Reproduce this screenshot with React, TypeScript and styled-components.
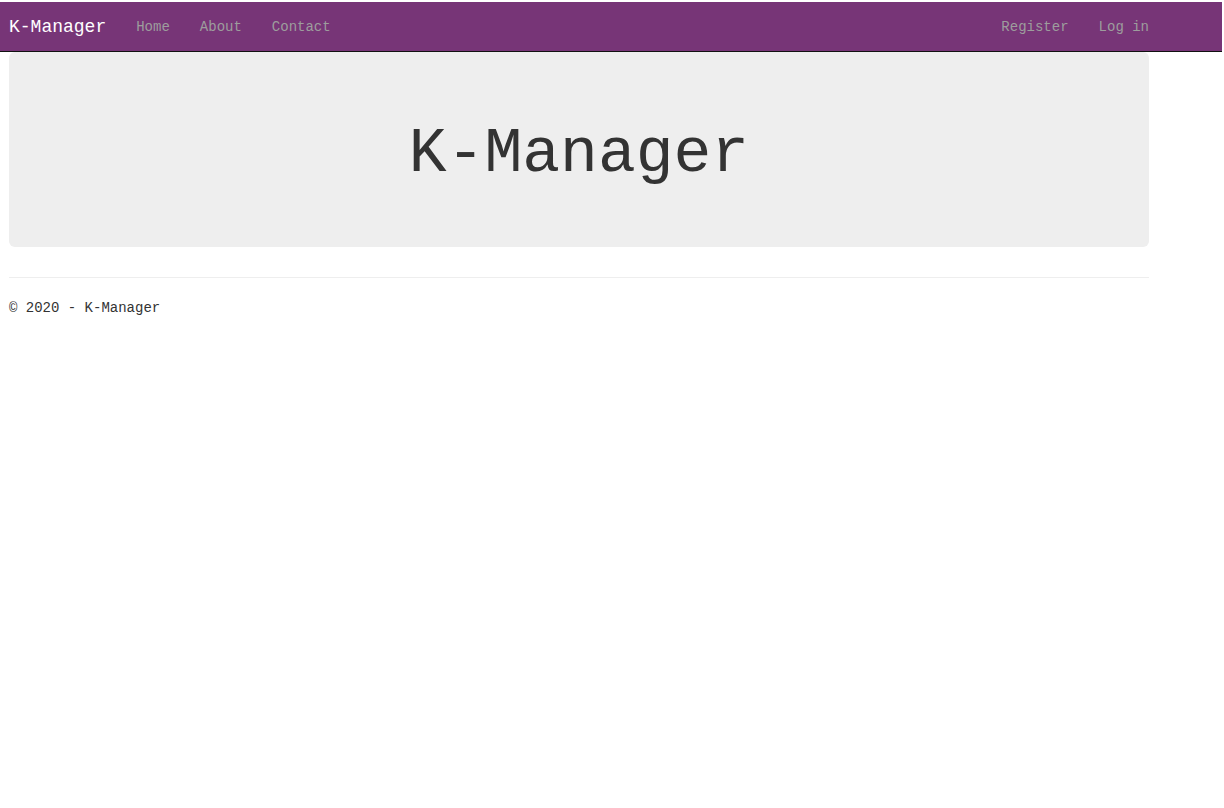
import React from "react";
import styled, { createGlobalStyle } from "styled-components";

const Global = createGlobalStyle`
  html, body { margin: 0; padding: 0; background: #fff; }
  body {
    font-family: "Liberation Mono", "DejaVu Sans Mono", monospace;
    font-size: 14px;
    line-height: 1.42857;
    color: #333;
    padding-top: 2px;
  }
  * { box-sizing: border-box; }
`;

const NavBar = styled.nav`
  height: 50px;
  margin-right: 2px;
  background: #773577;
  border-bottom: 1px solid #111;
  display: flex;
  align-items: center;
  justify-content: space-between;
  padding: 0 58px 0 9px;
`;

const Left = styled.div`
  display: flex;
  align-items: center;
`;

const Brand = styled.a`
  color: #fff;
  font-size: 18px;
  line-height: 20px;
  padding-right: 15px;
  text-decoration: none;
`;

const NavList = styled.ul`
  display: flex;
  list-style: none;
  margin: 0;
  padding: 0;
`;

const NavLink = styled.a`
  display: block;
  color: #9d9d9d;
  font-size: 14px;
  line-height: 20px;
  padding: 0 15px;
  text-decoration: none;
`;

const Container = styled.div`
  width: 1140px;
  margin-left: 9px;
`;

const Jumbotron = styled.div`
  background: #eee;
  border-radius: 6px;
  padding: 48px 0;
  margin-bottom: 30px;
  text-align: center;
`;

const Title = styled.h1`
  margin: 20px 0 10px;
  font-size: 63px;
  line-height: 1.1;
  font-weight: 400;
  color: #333;
`;

const Rule = styled.hr`
  border: 0;
  border-top: 1px solid #eee;
  margin: 0 0 20px;
`;

const Footer = styled.footer`
  p { margin: 0; font-size: 14px; line-height: 20px; color: #333; }
`;

export default function App() {
  return (
    <>
      <Global />
      <NavBar>
        <Left>
          <Brand href="#">K-Manager</Brand>
          <NavList>
            <li><NavLink href="#">Home</NavLink></li>
            <li><NavLink href="#">About</NavLink></li>
            <li><NavLink href="#">Contact</NavLink></li>
          </NavList>
        </Left>
        <NavList>
          <li><NavLink href="#">Register</NavLink></li>
          <li><NavLink href="#">Log in</NavLink></li>
        </NavList>
      </NavBar>
      <Container>
        <Jumbotron>
          <Title>K-Manager</Title>
        </Jumbotron>
        <Rule />
        <Footer>
          <p>© 2020 - K-Manager</p>
        </Footer>
      </Container>
    </>
  );
}
